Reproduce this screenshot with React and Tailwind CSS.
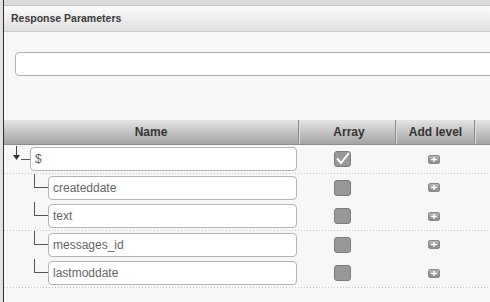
import React from 'react';

const rows = [
  { name: '$', root: true, checked: true },
  { name: 'createddate' },
  { name: 'text' },
  { name: 'messages_id' },
  { name: 'lastmoddate' },
];

function Connector({ root }) {
  if (root) {
    return (<svg width="26" height="28" className="shrink-0" viewBox="0 0 26 28">
        <line x1="12.5" y1="1" x2="12.5" y2="11" stroke="#444" strokeWidth="1"/>
        <polygon points="9,10 16,10 12.5,15" fill="#333"/>
        <line x1="17" y1="14.5" x2="26" y2="14.5" stroke="#555" strokeWidth="1"/>
      </svg>);
  }
  return (<svg width="44" height="28" className="shrink-0" viewBox="0 0 44 28">
      <line x1="30.5" y1="0" x2="30.5" y2="14" stroke="#555" strokeWidth="1"/>
      <line x1="30" y1="13.5" x2="44" y2="13.5" stroke="#555" strokeWidth="1"/>
    </svg>);
}

function Checkbox({ checked }) {
  return (<div className="w-[17px] h-[16px] rounded-[3px] bg-[#989898] border border-[#7c7c7c] flex items-center justify-center">
      {checked && (<svg width="15" height="14" viewBox="0 0 15 14">
          <path d="M2 6.5 L6 11 L14 1" fill="none" stroke="#fff" strokeWidth="2"/>
        </svg>)}
    </div>);
}

function AddButton() {
  return (<div className="w-[12px] h-[9px] rounded-[2px] bg-gradient-to-b from-[#b8b8b8] to-[#888] border border-[#8a8a8a] flex items-center justify-center">
      <svg width="6" height="5" viewBox="0 0 6 5">
        <line x1="0" y1="2.5" x2="6" y2="2.5" stroke="#fff" strokeWidth="1.4"/>
        <line x1="3" y1="0" x2="3" y2="5" stroke="#fff" strokeWidth="1.4"/>
      </svg>
    </div>);
}

export default function App() {
  return (<div className="w-[490px] h-[302px] flex overflow-hidden bg-[#f7f7f7] font-['Liberation_Sans',Arial,sans-serif]">
      <div className="w-[3px] shrink-0 bg-[#e2e2e2]"/>
      <div className="w-px shrink-0 bg-[#2e2e2e]"/>
      <div className="flex-1 min-w-0 flex flex-col">
        <div className="h-[6px] shrink-0 bg-[#dcdcdc] border-b border-[#c2c2c2]"/>
        <div className="h-[26px] shrink-0 bg-gradient-to-b from-[#fbfbfb] to-[#e0e0e0] border-b border-[#cccccc] flex items-center pl-[7px] text-[10.5px] font-bold text-[#3a3a3a]">
          Response Parameters
        </div>
        <div className="pt-[20px] pl-[11px] shrink-0">
          <div className="w-[500px] h-[24px] bg-white border border-[#b0b0b0] rounded-[4px]"/>
        </div>

        {/* table header */}
        <div className="mt-[44px] h-[25px] shrink-0 flex bg-gradient-to-b from-[#e4e4e4] to-[#a4a4a4] border-b border-[#8c8c8c] text-[12px] font-bold text-[#333]">
          <div className="w-[295px] shrink-0 flex items-center justify-center border-r border-[#8a8a8a]">Name</div>
          <div className="w-[97px] shrink-0 flex items-center justify-center border-l border-[#dcdcdc] border-r border-r-[#8a8a8a] pl-[3px]">Array</div>
          <div className="w-[79px] shrink-0 flex items-center justify-center border-l border-[#dcdcdc] border-r border-r-[#8a8a8a]">Add level</div>
          <div className="flex-1 border-l border-[#dcdcdc]"/>
        </div>

        {rows.map((r) => (<div key={r.name} className="h-[28.5px] shrink-0 flex flex-col">
            <div className="flex-1 flex items-center">
              <div className="w-[295px] shrink-0 flex items-center pr-[2px]">
                <Connector root={r.root}/>
                <div className="flex-1 h-[24px] bg-white border border-[#b4b4b4] rounded-[4px] flex items-center pl-[4px] text-[12px] text-[#666]">
                  {r.name}
                </div>
              </div>
              <div className="w-[97px] shrink-0 pl-[35px] flex items-center">
                <Checkbox checked={r.checked}/>
              </div>
              <div className="w-[79px] shrink-0 pl-[32px] flex items-center">
                <AddButton/>
              </div>
            </div>
            <div className="h-px bg-[linear-gradient(to_right,#c6c6c6_1px,transparent_1px)] bg-[length:3px_1px]"/>
          </div>))}
      </div>
    </div>);
}
